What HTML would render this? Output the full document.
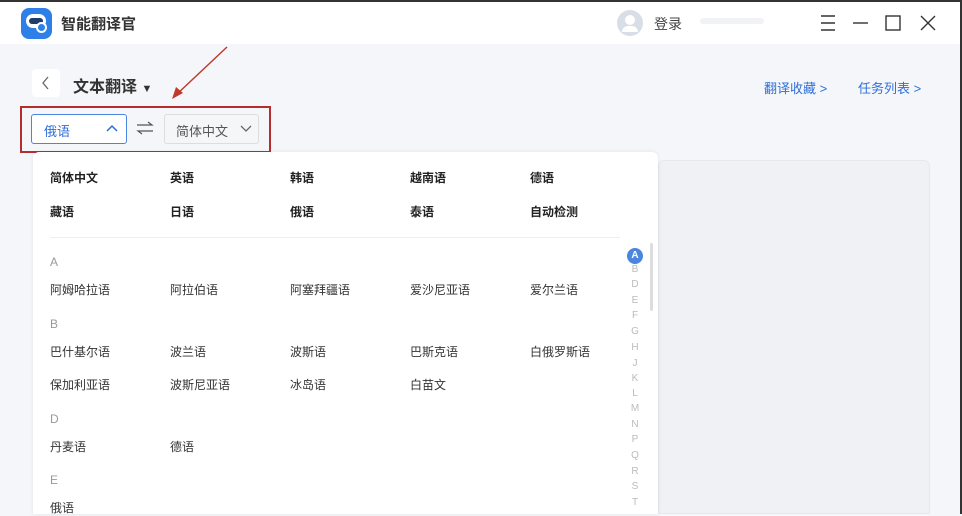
<!DOCTYPE html>
<html><head><meta charset="utf-8"><style>
*{margin:0;padding:0;box-sizing:border-box}
body{width:962px;height:514px;overflow:hidden;background:#f4f6f9;font-family:"Liberation Sans","Noto Sans CJK SC",sans-serif;position:relative;color:#333}
.a{position:absolute;white-space:nowrap}
.t{font-size:12px;color:#333}
.b{font-size:12px;font-weight:bold;color:#222}
.g{font-size:12px;color:#999}
.l{font-size:10px;color:#bbb;width:16px;text-align:center;left:627px}
</style></head><body>
<div class="a" style="left:0;top:0;width:962px;height:2px;background:#333"></div>
<div class="a" style="left:960px;top:0;width:2px;height:514px;background:#333"></div>
<div class="a" style="left:0;top:2px;width:960px;height:42px;background:#fff"></div>
<div class="a" style="left:21px;top:8px;width:31px;height:31px;border-radius:8px;background:#2f7fe8"></div>
<div class="a" style="left:26px;top:14px;width:20px;height:14px;border-radius:7px;background:#fff"></div>
<div class="a" style="left:29px;top:18px;width:14px;height:6px;border-radius:3px;background:#1d3d6e"></div>
<div class="a" style="left:36px;top:22px;width:11px;height:11px;border-radius:50%;background:#2f7fe8;border:2px solid #fff"></div>
<div class="a" style="left:61px;top:13px;font-size:15px;font-weight:bold;color:#333">智能翻译官</div>
<div class="a" style="left:617px;top:10px;width:26px;height:26px;border-radius:50%;background:#d9dde6"></div>
<div class="a" style="left:625px;top:15px;width:10px;height:10px;border-radius:50%;background:#fff"></div>
<div class="a" style="left:622px;top:26px;width:16px;height:6px;border-radius:6px 6px 0 0;background:#fff"></div>
<div class="a" style="left:654px;top:14px;font-size:14px;color:#444">登录</div>
<div class="a" style="left:700px;top:18px;width:64px;height:6px;background:#f0f2f5;border-radius:3px"></div>
<svg class="a" style="left:818px;top:12px" width="120" height="22" fill="none" stroke="#333" stroke-width="1.4">
<path d="M3 4h14M3 11h14M3 18h14"/><path d="M35 11h15"/><rect x="68" y="4" width="14" height="14"/><path d="M103 4l14 14M117 4l-14 14"/></svg>
<div class="a" style="left:32px;top:69px;width:28px;height:28px;background:#fff;border-radius:4px"></div>
<svg class="a" style="left:41px;top:76px" width="10" height="14"><path d="M7 1L2 7l5 6" stroke="#666" stroke-width="1.3" fill="none"/></svg>
<div class="a" style="left:73px;top:73px;font-size:16px;font-weight:bold;color:#333">文本翻译 <span style="font-size:11px">▼</span></div>
<svg class="a" style="left:168px;top:45px" width="62" height="56"><path d="M59 2L8 50" stroke="#c0392b" stroke-width="1.5"/><path d="M4 54l4-12l7 6z" fill="#c0392b"/></svg>
<div class="a" style="left:764px;top:78px;font-size:13px;color:#2f6fd8">翻译收藏 &gt;</div>
<div class="a" style="left:858px;top:78px;font-size:13px;color:#2f6fd8">任务列表 &gt;</div>
<div class="a" style="left:20px;top:106px;width:251px;height:47px;border:2px solid #b52e2e"></div>
<div class="a" style="left:31px;top:114px;width:96px;height:30px;border:1px solid #4a86e0;border-radius:3px;background:#fff"></div>
<div class="a" style="left:44px;top:121px;font-size:13px;color:#2f6fd8">俄语</div>
<svg class="a" style="left:106px;top:124px" width="12" height="8"><path d="M1 7l5-5l5 5" stroke="#2f6fd8" stroke-width="1.5" fill="none"/></svg>
<svg class="a" style="left:136px;top:120px" width="18" height="16" stroke="#555" fill="none" stroke-width="1.2"><path d="M1 5h15l-4-3M17 11H2l4 3"/></svg>
<div class="a" style="left:164px;top:114px;width:95px;height:30px;border:1px solid #ddd;border-radius:3px;background:#f5f6f8"></div>
<div class="a" style="left:176px;top:121px;font-size:13px;color:#555">简体中文</div>
<svg class="a" style="left:240px;top:125px" width="12" height="8"><path d="M1 1l5 5l5-5" stroke="#666" stroke-width="1.3" fill="none"/></svg>
<div class="a" style="left:658px;top:160px;width:272px;height:354px;background:#eff1f4;border-radius:6px 6px 0 0;border:1px solid #e6e8ec"></div>
<div class="a" style="left:33px;top:152px;width:625px;height:362px;background:#fff;border-radius:6px 6px 0 0;box-shadow:0 0 4px rgba(0,0,0,.08)"></div>
<div class="a b" style="left:50px;top:169px">简体中文</div><div class="a b" style="left:170px;top:169px">英语</div><div class="a b" style="left:290px;top:169px">韩语</div><div class="a b" style="left:410px;top:169px">越南语</div><div class="a b" style="left:530px;top:169px">德语</div>
<div class="a b" style="left:50px;top:203px">藏语</div><div class="a b" style="left:170px;top:203px">日语</div><div class="a b" style="left:290px;top:203px">俄语</div><div class="a b" style="left:410px;top:203px">泰语</div><div class="a b" style="left:530px;top:203px">自动检测</div>
<div class="a" style="left:50px;top:237px;width:570px;height:1px;background:#eee"></div>
<div class="a g" style="left:50px;top:255px">A</div>
<div class="a t" style="left:50px;top:281px">阿姆哈拉语</div><div class="a t" style="left:170px;top:281px">阿拉伯语</div><div class="a t" style="left:290px;top:281px">阿塞拜疆语</div><div class="a t" style="left:410px;top:281px">爱沙尼亚语</div><div class="a t" style="left:530px;top:281px">爱尔兰语</div>
<div class="a g" style="left:50px;top:317px">B</div>
<div class="a t" style="left:50px;top:343px">巴什基尔语</div><div class="a t" style="left:170px;top:343px">波兰语</div><div class="a t" style="left:290px;top:343px">波斯语</div><div class="a t" style="left:410px;top:343px">巴斯克语</div><div class="a t" style="left:530px;top:343px">白俄罗斯语</div>
<div class="a t" style="left:50px;top:376px">保加利亚语</div><div class="a t" style="left:170px;top:376px">波斯尼亚语</div><div class="a t" style="left:290px;top:376px">冰岛语</div><div class="a t" style="left:410px;top:376px">白苗文</div>
<div class="a g" style="left:50px;top:412px">D</div>
<div class="a t" style="left:50px;top:438px">丹麦语</div><div class="a t" style="left:170px;top:438px">德语</div>
<div class="a g" style="left:50px;top:473px">E</div>
<div class="a t" style="left:50px;top:499px">俄语</div>
<div class="a" style="left:627px;top:248px;width:16px;height:16px;border-radius:50%;background:#4a86e0;color:#fff;font-size:10px;text-align:center;line-height:16px;font-weight:bold">A</div>
<div class="a" style="left:650px;top:243px;width:3px;height:68px;background:#ddd;border-radius:2px"></div>
<div class="a l" style="top:264px">B</div><div class="a l" style="top:279px">D</div><div class="a l" style="top:295px">E</div><div class="a l" style="top:310px">F</div><div class="a l" style="top:326px">G</div><div class="a l" style="top:342px">H</div><div class="a l" style="top:358px">J</div><div class="a l" style="top:373px">K</div><div class="a l" style="top:388px">L</div><div class="a l" style="top:403px">M</div><div class="a l" style="top:419px">N</div><div class="a l" style="top:434px">P</div><div class="a l" style="top:450px">Q</div><div class="a l" style="top:466px">R</div><div class="a l" style="top:481px">S</div><div class="a l" style="top:497px">T</div>
</body></html>
